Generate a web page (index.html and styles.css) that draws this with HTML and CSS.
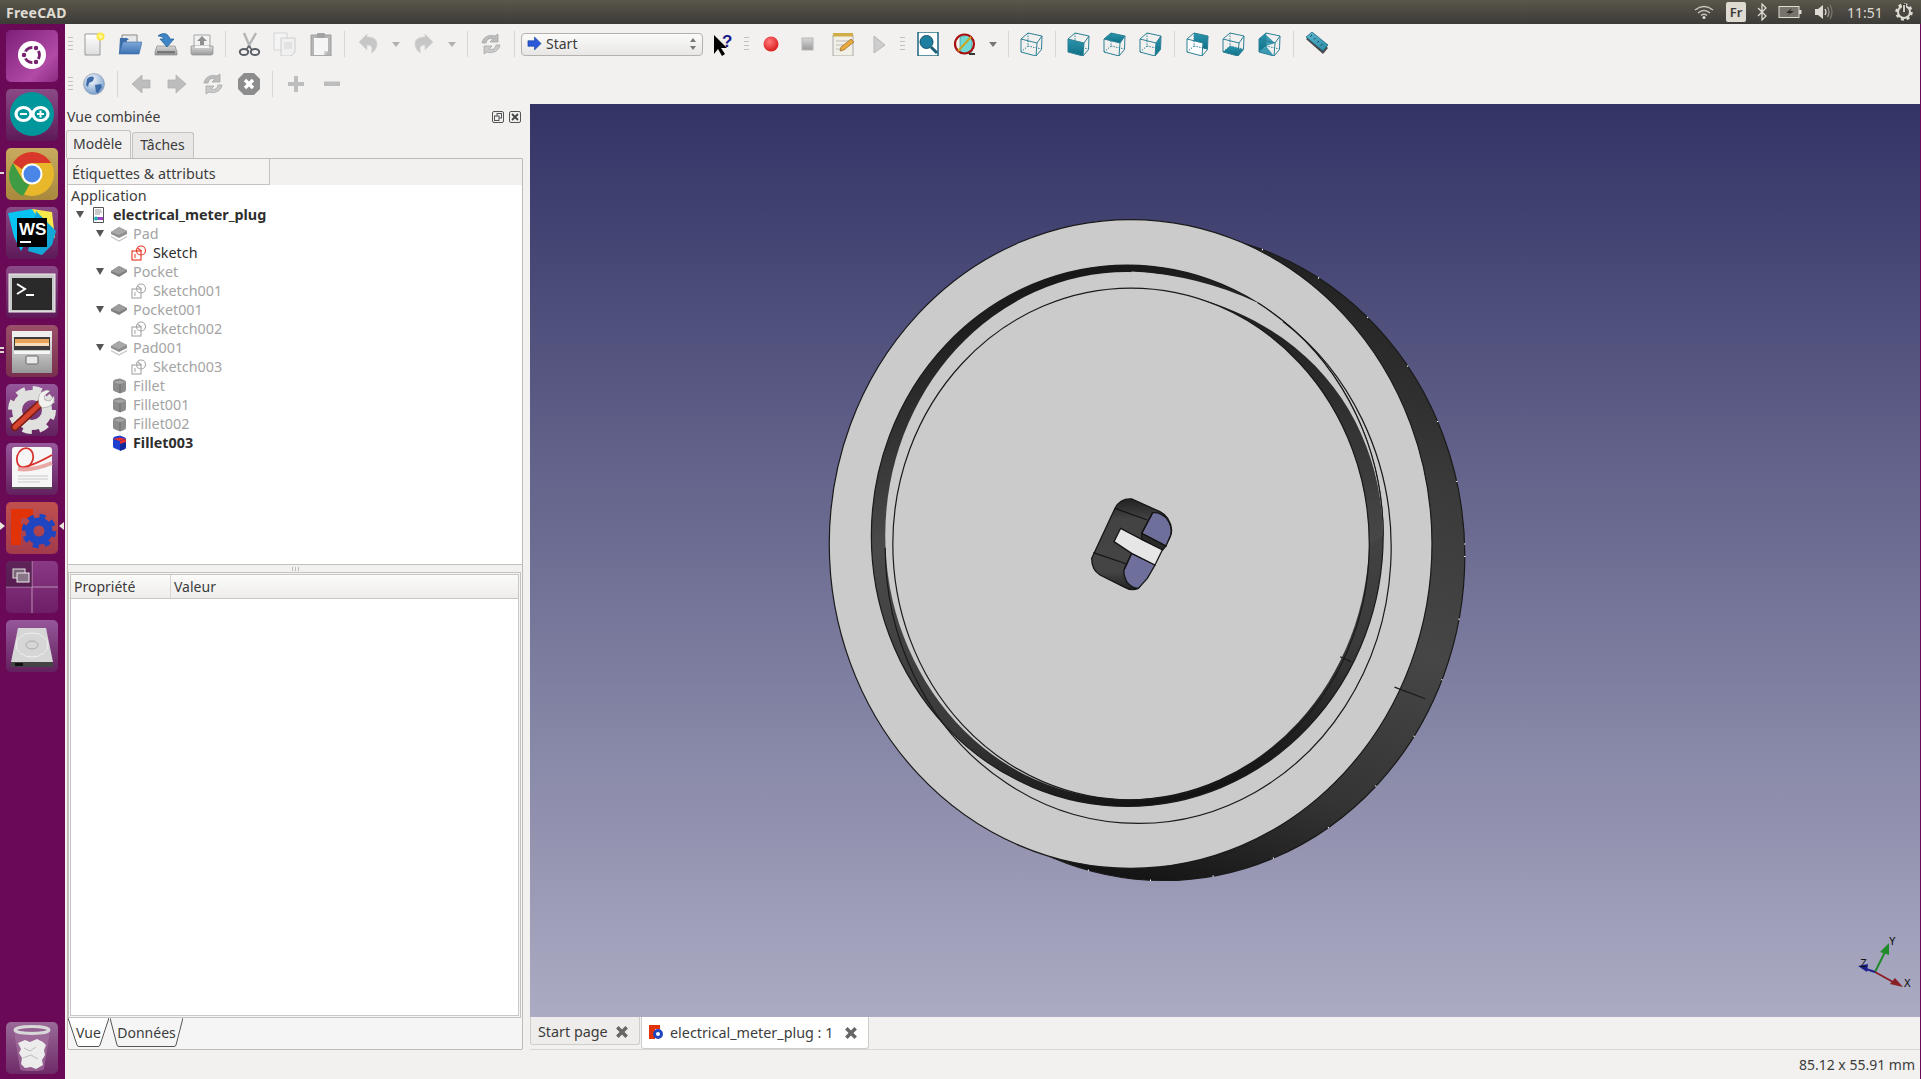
FILE: index.html
```html
<!DOCTYPE html>
<html lang="fr">
<head>
<meta charset="utf-8">
<title>FreeCAD</title>
<link rel="stylesheet" href="styles.css">
</head>
<body>
<svg class="defs" width="0" height="0" aria-hidden="true">
  <defs>
    <linearGradient id="g-paper" x1="0" y1="0" x2="0" y2="1"><stop offset="0" stop-color="#fff"/><stop offset="1" stop-color="#dedede"/></linearGradient>
    <linearGradient id="g-grey" x1="0" y1="0" x2="0" y2="1"><stop offset="0" stop-color="#d8d8d8"/><stop offset="1" stop-color="#9a9a9a"/></linearGradient>
    <linearGradient id="g-folder" x1="0" y1="0" x2="0" y2="1"><stop offset="0" stop-color="#7fa8d8"/><stop offset="1" stop-color="#3b72b4"/></linearGradient>
    <linearGradient id="g-cab" x1="0" y1="0" x2="0" y2="1"><stop offset="0" stop-color="#e4e4e2"/><stop offset="1" stop-color="#98989a"/></linearGradient>
    <linearGradient id="g-teal" x1="0" y1="0" x2="0" y2="1"><stop offset="0" stop-color="#2a96ae"/><stop offset="1" stop-color="#0f6f86"/></linearGradient>
    <linearGradient id="g-ruler" x1="0" y1="0" x2="1" y2="1"><stop offset="0" stop-color="#5cb8d0"/><stop offset="1" stop-color="#2a8aa6"/></linearGradient>
    <radialGradient id="g-red" cx=".4" cy=".35" r=".7"><stop offset="0" stop-color="#ff7a7a"/><stop offset="1" stop-color="#d81818"/></radialGradient>
    <radialGradient id="g-globe" cx=".4" cy=".3" r=".8"><stop offset="0" stop-color="#f4f8fc"/><stop offset="1" stop-color="#6a94c6"/></radialGradient>
    <linearGradient id="g-side" x1="0.75" y1="0" x2="0.45" y2="1"><stop offset="0" stop-color="#1e1e1e"/><stop offset=".3" stop-color="#3a3a3a"/><stop offset=".55" stop-color="#464646"/><stop offset=".8" stop-color="#343434"/><stop offset="1" stop-color="#141414"/></linearGradient>
    <linearGradient id="g-groove" x1="0.3" y1="0" x2="0.5" y2="1"><stop offset="0" stop-color="#141414"/><stop offset=".45" stop-color="#4a4a4a"/><stop offset=".8" stop-color="#3a3a3a"/><stop offset="1" stop-color="#141414"/></linearGradient>
    <linearGradient id="g-crescent" x1="0" y1="0" x2="0" y2="1"><stop offset="0" stop-color="#1c1c1c"/><stop offset="1" stop-color="#484848"/></linearGradient>
    <linearGradient id="g-knob" x1="0" y1="0" x2="0" y2="1"><stop offset="0" stop-color="#222"/><stop offset=".22" stop-color="#434343"/><stop offset=".8" stop-color="#444"/><stop offset="1" stop-color="#222"/></linearGradient>

    <symbol id="i-new" viewBox="0 0 24 24"><path d="M3 2h15v21H3z" fill="url(#g-paper)" stroke="#9a9a9a"/><circle cx="18.500" cy="4.500" r="4" fill="#fde84a"/><circle cx="18.500" cy="4.500" r="2" fill="#fff79a"/></symbol>
    <symbol id="i-open" viewBox="0 0 24 24"><path d="M4 3h15v8H4z" fill="#e8e8e8" stroke="#8a8a8a"/><path d="M2 6h7l2 2h-2l-2 14H1z" fill="#3c6ea8"/><path d="M5 10h19l-3 12H1z" fill="url(#g-folder)" stroke="#3a6ca6" stroke-width=".6"/></symbol>
    <symbol id="i-save" viewBox="0 0 24 24"><path d="M3 14h18l2 6v3H1v-3z" fill="url(#g-grey)" stroke="#8a8a8a" stroke-width=".7"/><rect x="3" y="19" width="18" height="2.500" fill="#777"/><path d="M4 4c5-4 10-3 12 3h4l-7 8-7-8h4C9 5 7 4 4 4z" fill="#3f86c8" stroke="#1f5a94" stroke-width=".7"/></symbol>
    <symbol id="i-saveas" viewBox="0 0 24 24"><path d="M4 3h16v13H4z" fill="#f2f2f2" stroke="#a5a5a5"/><path d="M12 4l5 5h-3v4h-4V9H7z" fill="#8f8f8f"/><path d="M1 14h22v7q0 2-2 2H3q-2 0-2-2z" fill="url(#g-grey)" stroke="#8d8d8d" stroke-width=".7"/><rect x="5" y="14" width="14" height="2" fill="#f7f7f7"/></symbol>
    <symbol id="i-cut" viewBox="0 0 24 24"><path d="M7 1l6 14M19 1L11 15" stroke="#b5b5b5" stroke-width="2.400" fill="none"/><ellipse cx="7" cy="20" rx="4.200" ry="3" fill="none" stroke="#5b6068" stroke-width="2"/><ellipse cx="18" cy="20" rx="4.200" ry="3" fill="none" stroke="#5b6068" stroke-width="2"/><path d="M12 14L9 18M12 14l3 4" stroke="#5b6068" stroke-width="1.600"/></symbol>
    <symbol id="i-copy" viewBox="0 0 24 24"><path d="M1 1h13v17H1z" fill="#f4f4f4" stroke="#d4d4d4"/><path d="M8 6h14v14l-4 4H8z" fill="#f0f0f0" stroke="#cdcdcd"/><path d="M11 10h8v7h-8z" fill="#e2e2e2"/></symbol>
    <symbol id="i-paste" viewBox="0 0 24 24"><path d="M2 3h20v21H2z" fill="#b5b5b5" stroke="#9c9c9c"/><path d="M5 6h14v13l-4 4H5z" fill="#f5f5f5"/><rect x="8" y="1" width="8" height="5" rx="1" fill="#a2a2a2"/><path d="M15 23v-4h4z" fill="#cfcfcf"/></symbol>
    <symbol id="i-undo" viewBox="0 0 24 24"><path d="M11 2L3 10l8 8v-5c3 0 5 1 5 4 0 2-1 4-1 4 4-2 6-5 6-9 0-5-4-7-10-7z" fill="#c6c6c6" stroke="#d6d6d6" stroke-width=".7"/></symbol>
    <symbol id="i-redo" viewBox="0 0 24 24"><path d="M13 2l8 8-8 8v-5c-3 0-5 1-5 4 0 2 1 4 1 4-4-2-6-5-6-9 0-5 4-7 10-7z" fill="#c6c6c6" stroke="#d6d6d6" stroke-width=".7"/></symbol>
    <symbol id="i-refresh" viewBox="0 0 24 24"><path d="M3 11C4 5 10 2 16 4l3-2v8h-8l3-3c-4-1-6 0-7 4z" fill="#bcbcbc" stroke="#a2a2a2" stroke-width=".7"/><path d="M21 13c-1 6-7 9-13 7l-3 2v-8h8l-3 3c4 1 6 0 7-4z" fill="#c9c9c9" stroke="#a2a2a2" stroke-width=".7"/></symbol>
    <symbol id="i-rec" viewBox="0 0 24 24"><circle cx="12" cy="12" r="7.500" fill="url(#g-red)"/></symbol>
    <symbol id="i-stop" viewBox="0 0 24 24"><rect x="7" y="6" width="11" height="12" fill="url(#g-grey)" stroke="#b8b8b8"/></symbol>
    <symbol id="i-note" viewBox="0 0 24 24"><path d="M2 3h20v21H2z" fill="#f1efe6" stroke="#aaa"/><rect x="2" y="1" width="20" height="3.500" fill="#cfae4a"/><path d="M5 9h13M5 13h9M5 17h7" stroke="#bbb"/><path d="M9 19l1-4L20 7l3 3-10 8z" fill="#e7a83e" stroke="#8a5f1a" stroke-width=".6"/></symbol>
    <symbol id="i-play" viewBox="0 0 24 24"><path d="M7 4l11 9L7 21z" fill="#cdcdcd" stroke="#b8b8b8"/></symbol>
    <symbol id="i-fit" viewBox="0 0 24 24"><path d="M2 0h20v24H2z" fill="#fff" stroke="#2a6e86" stroke-width="1.600"/><circle cx="10.500" cy="10" r="6.500" fill="#1f7fa0" stroke="#134f66"/><path d="M15 15l6 6" stroke="#1a5f78" stroke-width="3"/></symbol>
    <symbol id="i-draw" viewBox="0 0 24 24"><path d="M7 5l8-2 4 3v14l-8 2-4-3z" fill="#72d8d4" stroke="#3a9a98" stroke-width=".7"/><circle cx="11.500" cy="12" r="9.500" fill="none" stroke="#a80f0f" stroke-width="2.200"/><path d="M18 5L5 19" stroke="#c9a620" stroke-width="2"/><path d="M16 21h6v2h-6z" fill="#333"/></symbol>
    <symbol id="i-cube" viewBox="0 0 24 24"><g fill="none" stroke="#2b7f94" stroke-width="1"><path d="M8 1v13M8 14L1 20M8 14l13.500 3" stroke-dasharray="1.400 1.200"/><path d="M1 7L8 1l14 3-.5 13.500L16 24 1 20zM1 7l16 4 5-7M17 11l-1 13"/></g></symbol>
    <symbol id="i-front" viewBox="0 0 24 24"><path d="M1 7l16 4-1 13-15-4z" fill="url(#g-teal)"/><use href="#i-cube" width="24" height="24"/></symbol>
    <symbol id="i-top" viewBox="0 0 24 24"><path d="M1 7L8 1l14 3-5 7z" fill="url(#g-teal)"/><use href="#i-cube" width="24" height="24"/></symbol>
    <symbol id="i-right" viewBox="0 0 24 24"><path d="M17 11l5-7-.5 13.500L16 24z" fill="url(#g-teal)"/><use href="#i-cube" width="24" height="24"/></symbol>
    <symbol id="i-rear" viewBox="0 0 24 24"><path d="M8 1l14 3-.5 13.500L8 14z" fill="url(#g-teal)"/><path d="M1 7l16 4-1 13-15-4z" fill="#fff"/><use href="#i-cube" width="24" height="24"/></symbol>
    <symbol id="i-bottom" viewBox="0 0 24 24"><path d="M8 14l13.500 3.500L16 24 1 20z" fill="url(#g-teal)"/><use href="#i-cube" width="24" height="24"/></symbol>
    <symbol id="i-left" viewBox="0 0 24 24"><path d="M1 7L8 1v13l-7 6z" fill="url(#g-teal)"/><path d="M8 3l9 8-9 3zM1 20l7-6 8 10z" fill="#3a9ab2"/><use href="#i-cube" width="24" height="24"/></symbol>
    <symbol id="i-measure" viewBox="0 0 24 24"><path d="M1 7l6-5 16 14-5 6z" fill="#4a4a4a"/><path d="M1 5l6-5 16 13-5 6z" fill="url(#g-ruler)" stroke="#1f5f74" stroke-width=".7"/><path d="M7 3l-1.500 1.500M10.500 6L9 7.500M14 9l-1.500 1.500M17.500 12L16 13.500" stroke="#123" stroke-width=".9"/></symbol>
    <symbol id="i-globe" viewBox="0 0 24 24"><circle cx="12" cy="12" r="10.500" fill="url(#g-globe)" stroke="#8a96a6" stroke-width=".6"/><path d="M5 7c3-3 6-3 7-1l-1 3-4 2-1 4-2-2zM13 13l6-1 1 3-4 6-2-1z" fill="#3c6aa6"/></symbol>
    <symbol id="i-back" viewBox="0 0 24 24"><path d="M3 12l10-9v5h8v8h-8v5z" fill="#bdbdbd" stroke="#adadad" stroke-width=".7"/></symbol>
    <symbol id="i-fwd" viewBox="0 0 24 24"><path d="M21 12l-10-9v5H3v8h8v5z" fill="#bdbdbd" stroke="#adadad" stroke-width=".7"/></symbol>
    <symbol id="i-halt" viewBox="0 0 24 24"><path d="M7 1h10l6 6v10l-6 6H7l-6-6V7z" fill="#8d8d8d"/><path d="M8 8l8 8M16 8l-8 8" stroke="#fff" stroke-width="3.400"/></symbol>
    <symbol id="i-plus" viewBox="0 0 24 24"><path d="M10 4h4v6h6v4h-6v6h-4v-6H4v-4h6z" fill="#bdbdbd"/></symbol>
    <symbol id="i-minus" viewBox="0 0 24 24"><rect x="4" y="9.500" width="16" height="4.500" fill="#bdbdbd"/></symbol>

    <symbol id="t-doc" viewBox="0 0 16 16"><path d="M2.500 0.500h10v15h-10z" fill="#fff" stroke="#555"/><path d="M4 3h6M4 5h7M4 7h5" stroke="#777" stroke-width=".8"/><rect x="6" y="10" width="6" height="3" fill="#a040c0"/><circle cx="5" cy="11.500" r="2" fill="#20b0b0"/></symbol>
    <symbol id="t-pad" viewBox="0 0 16 16"><path d="M0 10.500l8 4.500 8-4.500" fill="none" stroke="#c6c6c6" stroke-width="1.200"/><path d="M0 6l8-5 8 4v3l-8 4-8-4z" fill="#8e8e8e"/><path d="M0 6l8-5 8 4-8 4z" fill="#a8a8a8"/></symbol>
    <symbol id="t-pocket" viewBox="0 0 16 16"><path d="M0 7l8-5 8 4v2l-8 5-8-4z" fill="#7f7f7f"/><path d="M0 7l8-5 8 4-8 4z" fill="#9c9c9c"/></symbol>
    <symbol id="t-sketch" viewBox="0 0 16 16"><g fill="none" stroke="currentColor" stroke-width="1.100"><rect x="1" y="6" width="9" height="9"/><circle cx="10" cy="5.500" r="4.500"/><path d="M6.500 3l4 3M3 10h2M3 12h2"/></g></symbol>
    <symbol id="t-box" viewBox="0 0 16 16"><path d="M2 4q0-2 2-2.500l5-1 5 2q1 .5 1 2v7q0 2-2 2.500l-4 1.500-5-2q-2-.5-2-2z" fill="#8c8c8c"/><path d="M2 4l7-1.500L15 4 9 6z" fill="#a6a6a6"/><path d="M9 6v9" stroke="#6a6a6a"/></symbol>
    <symbol id="t-fillet" viewBox="0 0 16 16"><path d="M2 4q0-2 2-2.500l5-1 5 2q1 .5 1 2v7q0 2-2 2.500l-4 1.500-5-2q-2-.5-2-2z" fill="#1e3fd0"/><path d="M2 4l7-1.500L15 4 9 6z" fill="#e23030"/><path d="M9 6l6-2v8q0 2-2 2.500L9 16z" fill="#102a9a"/><path d="M9 6l6-2v3l-6 2z" fill="#e23030"/></symbol>
  </defs>
</svg>

<header class="panel-top">
  <span class="app-name">FreeCAD</span>
  <div class="indicators">
    <svg class="ind ind-wifi" viewBox="0 0 20 14" width="20" height="14"><g fill="none" stroke="#c9c6be" stroke-width="1.500"><path d="M1 5q9-7 18 0M4 8q6-5 12 0M7 10.500q3-2.500 6 0"/></g><circle cx="10" cy="12.500" r="1.500" fill="#dfdbd2"/></svg>
    <span class="lang">Fr</span>
    <svg class="ind ind-bt" viewBox="0 0 10 18" width="10" height="18"><path d="M1 5l8 8-4 4V1l4 4-8 8" fill="none" stroke="#dfdbd2" stroke-width="1.300"/></svg>
    <svg class="ind ind-bat" viewBox="0 0 24 14" width="24" height="14"><rect x="1" y="1.500" width="20" height="11" fill="#77746c" stroke="#dfdbd2"/><rect x="21" y="5" width="2.500" height="4" fill="#dfdbd2"/><path d="M14 3L8 8h4l-3 3 7-5h-4z" fill="#2c2b28"/></svg>
    <svg class="ind ind-vol" viewBox="0 0 20 18" width="20" height="18"><path d="M1 6h3l5-4v14l-5-4H1z" fill="#dfdbd2"/><g fill="none" stroke-width="1.300"><path d="M11 6q2 3 0 6" stroke="#dfdbd2"/><path d="M13.500 4q3 5 0 10" stroke="#9d9a92"/><path d="M16 2q4 7 0 14" stroke="#77746c"/></g></svg>
    <span class="clock">11:51</span>
    <svg class="ind ind-gear" viewBox="0 0 18 18" width="18" height="18"><circle cx="9" cy="9" r="6" fill="none" stroke="#dfdbd2" stroke-width="2"/><circle cx="9" cy="9" r="7.500" fill="none" stroke="#dfdbd2" stroke-width="2.500" stroke-dasharray="3 2.890"/><path d="M9 1v8" stroke="#3c3b37" stroke-width="4"/><path d="M9 2v7" stroke="#dfdbd2" stroke-width="1.800"/></svg>
  </div>
</header>

<div class="main">
  <nav class="launcher">
    <div class="tile tile-ubuntu"><svg viewBox="0 0 52 52"><circle cx="26" cy="25" r="14" fill="#fff"/><circle cx="26" cy="25" r="7.500" fill="none" stroke="#77216f" stroke-width="2.800"/><g fill="#77216f" stroke="#fff" stroke-width="1.500"><circle cx="18" cy="25" r="3"/><circle cx="30" cy="18" r="3"/><circle cx="30" cy="32" r="3"/></g></svg></div>
    <div class="tile tile-arduino"><svg viewBox="0 0 52 52"><circle cx="26" cy="25" r="22" fill="#00979c"/><g fill="none" stroke="#fff" stroke-width="3.200"><ellipse cx="17.500" cy="25" rx="7.500" ry="6.500"/><ellipse cx="34.500" cy="25" rx="7.500" ry="6.500"/></g><path d="M14 25h7M31 25h7M34.500 21.500v7" stroke="#fff" stroke-width="2"/></svg></div>
    <div class="tile tile-chrome"><svg viewBox="0 0 52 52"><circle cx="26" cy="26" r="22" fill="#e8b82a"/><path d="M7 15a22 22 0 0 1 38 0H26a11 11 0 0 0-10 6z" fill="#d8372b"/><path d="M7 15l9.500 16.500a11 11 0 0 0 7 5L17 48A22 22 0 0 1 7 15z" fill="#3f9c44"/><circle cx="26" cy="26" r="10.500" fill="#fff"/><circle cx="26" cy="26" r="8.500" fill="#4a86e8"/></svg></div>
    <div class="tile tile-ws"><svg viewBox="0 0 52 52"><path d="M2 6l24-4 7 9-18 33L8 30z" fill="#07c3f2"/><path d="M26 2l20 3 3 26-8-6z" fill="#f7e94a"/><path d="M30 4l20 20-4 14-10 10-14-4z" fill="#11a8d8"/><rect x="11" y="11" width="30" height="29" fill="#000"/><text class="ws-text" x="13" y="28">WS</text><rect x="14" y="34" width="11" height="2" fill="#fff"/></svg></div>
    <div class="tile tile-term"><svg viewBox="0 0 52 52"><rect x="3" y="8" width="46" height="38" fill="#c9c9c9" stroke="#eee"/><rect x="6" y="12" width="40" height="32" fill="#2a2a2a"/><path d="M11 18l8 5-8 5" fill="none" stroke="#fff" stroke-width="2"/><rect x="20" y="28" width="8" height="2" fill="#fff"/></svg></div>
    <div class="tile tile-files"><svg viewBox="0 0 52 52"><path d="M6 6h40v8H6z" fill="#efefed"/><rect x="6" y="12" width="40" height="36" fill="url(#g-cab)"/><rect x="8" y="12" width="36" height="13" fill="#3c3c3c"/><rect x="9" y="14" width="34" height="6" fill="#e8a35a"/><rect x="9" y="18" width="34" height="3" fill="#f7ddb8"/><path d="M8 26h36v3H8z" fill="#f5f5f5"/><rect x="20" y="31" width="12" height="8" rx="1" fill="#e9e9e9" stroke="#666"/></svg></div>
    <div class="tile tile-settings"><svg viewBox="0 0 52 52"><circle cx="26" cy="26" r="15" fill="none" stroke="#e0e0de" stroke-width="10"/><circle cx="26" cy="26" r="21" fill="none" stroke="#e0e0de" stroke-width="6" stroke-dasharray="9 7.500"/><path d="M9 43L36 18" stroke="#7a1c12" stroke-width="8" stroke-linecap="round"/><path d="M9 43L36 18" stroke="#d4442e" stroke-width="5" stroke-linecap="round"/><path d="M33 20q-3-12 8-14l3 1-6 5 1 4 5 1 4-5q2 11-12 12z" fill="#f2f2f0" stroke="#999" stroke-width=".6"/></svg></div>
    <div class="tile tile-evince"><svg viewBox="0 0 52 52"><rect x="6" y="4" width="40" height="42" rx="3" fill="#f6f6f6"/><rect x="6" y="44" width="40" height="2" fill="#555"/><g fill="none" stroke="#d9322e"><ellipse cx="19" cy="15" rx="8" ry="10" stroke-width="1.800" transform="rotate(18 19 15)"/><path d="M13 24q8 2 33-12" stroke-width="2"/><path d="M12 26q14 2 34-6" stroke="#e9a8a6" stroke-width="4"/></g><path d="M12 33h30M12 36h30M12 39h22" stroke="#c9c9c9"/></svg></div>
    <div class="tile tile-freecad"><svg viewBox="0 0 52 52"><g fill="#e23208"><rect x="5" y="7" width="10" height="36"/><rect x="5" y="7" width="22" height="9"/><rect x="5" y="22" width="16" height="7"/></g><circle cx="33" cy="29" r="9.500" fill="none" stroke="#1f46c0" stroke-width="8"/><circle cx="33" cy="29" r="15" fill="none" stroke="#1f46c0" stroke-width="4.500" stroke-dasharray="6 5.800"/></svg></div>
    <div class="tile tile-workspace"><svg viewBox="0 0 52 52"><path d="M26 0v52M0 26h52" stroke="#c9a8c6" stroke-width=".8"/><rect x="0" y="0" width="26" height="26" fill="#2b0a28" opacity=".45"/><rect x="7" y="8" width="12" height="9" fill="#7a6478" stroke="#e2e2e2"/><rect x="11" y="12" width="12" height="9" fill="#8a7488" stroke="#f0f0f0"/></svg></div>
    <div class="tile tile-hdd"><svg viewBox="0 0 52 52"><path d="M12 8h28l7 34H5z" fill="#d6d6d6"/><ellipse cx="26" cy="25" rx="16" ry="12" fill="none" stroke="#f0f0f0"/><ellipse cx="26" cy="25" rx="6" ry="4" fill="none" stroke="#a9a9a9"/><path d="M5 42h42v5H5z" fill="#444"/><path d="M9 43h8v3H9z" fill="#111"/></svg></div>
    <div class="tile tile-trash"><svg viewBox="0 0 52 52"><path d="M8 9l6 38q0 2 12 2t12-2l6-38z" fill="#a878a4" opacity=".6"/><path d="M12 21l7-3 5 2 7-3 6 3 3 3-2 5 1 5-3 5 1 5-7 4-5-2-6 1-4-4 1-6-3-5 2-4z" fill="#ececec"/><path d="M18 26l6 3 6-4M17 36l8-3 7 4" fill="none" stroke="#bdbdbd"/><ellipse cx="26" cy="8" rx="17" ry="3.500" fill="none" stroke="#d8d8d8" stroke-width="2.800"/></svg></div>
    <span class="pip pip-chrome"></span><span class="pip pip-files"></span><span class="pip pip-files2"></span>
    <span class="tri tri-left"></span><span class="tri tri-right"></span>
  </nav>

  <div class="app">
    <div class="toolbars">
      <div class="toolbar">
        <span class="handle"></span>
        <span class="tool"><svg class="ic"><use href="#i-new"/></svg></span>
        <span class="tool"><svg class="ic"><use href="#i-open"/></svg></span>
        <span class="tool"><svg class="ic"><use href="#i-save"/></svg></span>
        <span class="tool"><svg class="ic"><use href="#i-saveas"/></svg></span>
        <span class="sep"></span>
        <span class="tool"><svg class="ic"><use href="#i-cut"/></svg></span>
        <span class="tool"><svg class="ic"><use href="#i-copy"/></svg></span>
        <span class="tool"><svg class="ic"><use href="#i-paste"/></svg></span>
        <span class="sep"></span>
        <span class="tool"><svg class="ic"><use href="#i-undo"/></svg></span>
        <span class="dd"></span>
        <span class="tool"><svg class="ic"><use href="#i-redo"/></svg></span>
        <span class="dd"></span>
        <span class="sep"></span>
        <span class="tool"><svg class="ic"><use href="#i-refresh"/></svg></span>
        <span class="sep"></span>
        <div class="combo">
          <svg class="combo-ic" viewBox="0 0 16 16"><path d="M1 5h7V1l7 7-7 7v-4H1z" fill="#2a58d8" stroke="#123a9a" stroke-width=".6"/></svg>
          <span class="combo-text">Start</span>
          <span class="combo-arrows"><i class="up"></i><i class="down"></i></span>
        </div>
        <span class="tool tool-help"><svg class="ic" viewBox="0 0 24 24"><path d="M4 3v19l4-5 4 7 3-2-4-6h6z" fill="#000"/><text class="help-q" x="12" y="15">?</text></svg></span>
        <span class="handle handle-a"></span>
        <span class="tool"><svg class="ic"><use href="#i-rec"/></svg></span>
        <span class="tool"><svg class="ic"><use href="#i-stop"/></svg></span>
        <span class="tool"><svg class="ic"><use href="#i-note"/></svg></span>
        <span class="tool"><svg class="ic"><use href="#i-play"/></svg></span>
        <span class="handle handle-b"></span>
        <span class="tool"><svg class="ic"><use href="#i-fit"/></svg></span>
        <span class="tool tool-draw"><svg class="ic"><use href="#i-draw"/></svg></span>
        <span class="dd dd-dark"></span>
        <span class="sep"></span>
        <span class="tool"><svg class="ic"><use href="#i-cube"/></svg></span>
        <span class="sep"></span>
        <span class="tool"><svg class="ic"><use href="#i-front"/></svg></span>
        <span class="tool"><svg class="ic"><use href="#i-top"/></svg></span>
        <span class="tool"><svg class="ic"><use href="#i-right"/></svg></span>
        <span class="sep"></span>
        <span class="tool"><svg class="ic"><use href="#i-rear"/></svg></span>
        <span class="tool"><svg class="ic"><use href="#i-bottom"/></svg></span>
        <span class="tool"><svg class="ic"><use href="#i-left"/></svg></span>
        <span class="sep"></span>
        <span class="tool"><svg class="ic"><use href="#i-measure"/></svg></span>
      </div>
      <div class="toolbar">
        <span class="handle"></span>
        <span class="tool"><svg class="ic"><use href="#i-globe"/></svg></span>
        <span class="sep"></span>
        <span class="tool"><svg class="ic"><use href="#i-back"/></svg></span>
        <span class="tool"><svg class="ic"><use href="#i-fwd"/></svg></span>
        <span class="tool"><svg class="ic"><use href="#i-refresh"/></svg></span>
        <span class="tool"><svg class="ic"><use href="#i-halt"/></svg></span>
        <span class="sep"></span>
        <span class="tool"><svg class="ic"><use href="#i-plus"/></svg></span>
        <span class="tool"><svg class="ic"><use href="#i-minus"/></svg></span>
      </div>
    </div>

    <div class="workspace">
      <aside class="dock">
        <div class="dock-title">
          <span>Vue combinée</span>
          <span class="dock-btns">
            <svg viewBox="0 0 12 12" width="12" height="12"><rect x="0.500" y="0.500" width="11" height="11" rx="1.500" fill="none" stroke="#555"/><rect x="5" y="2.500" width="4.500" height="4.500" fill="none" stroke="#555"/><rect x="2.500" y="5" width="4.500" height="4.500" fill="#f2f1f0" stroke="#555"/></svg>
            <svg viewBox="0 0 12 12" width="12" height="12"><rect x="0.500" y="0.500" width="11" height="11" rx="1.500" fill="none" stroke="#555"/><path d="M3 3l6 6M9 3l-6 6" stroke="#444" stroke-width="1.800"/></svg>
          </span>
        </div>
        <div class="tabs">
          <span class="tab tab-on">Modèle</span>
          <span class="tab">Tâches</span>
        </div>
        <div class="panel">
          <div class="tree-head"><span class="tree-head-cell">Étiquettes &amp; attributs</span></div>
          <div class="tree">
            <div class="row row-root">Application</div>
            <div class="row l0 bold"><i class="arrow"></i><svg class="ti"><use href="#t-doc"/></svg>electrical_meter_plug</div>
            <div class="row l1 off"><i class="arrow"></i><svg class="ti"><use href="#t-pad"/></svg>Pad</div>
            <div class="row l2 red"><i class="arrow none"></i><svg class="ti"><use href="#t-sketch"/></svg><span class="dark">Sketch</span></div>
            <div class="row l1 off"><i class="arrow"></i><svg class="ti"><use href="#t-pocket"/></svg>Pocket</div>
            <div class="row l2 off"><i class="arrow none"></i><svg class="ti"><use href="#t-sketch"/></svg>Sketch001</div>
            <div class="row l1 off"><i class="arrow"></i><svg class="ti"><use href="#t-pocket"/></svg>Pocket001</div>
            <div class="row l2 off"><i class="arrow none"></i><svg class="ti"><use href="#t-sketch"/></svg>Sketch002</div>
            <div class="row l1 off"><i class="arrow"></i><svg class="ti"><use href="#t-pad"/></svg>Pad001</div>
            <div class="row l2 off"><i class="arrow none"></i><svg class="ti"><use href="#t-sketch"/></svg>Sketch003</div>
            <div class="row l1 off"><i class="arrow none"></i><svg class="ti"><use href="#t-box"/></svg>Fillet</div>
            <div class="row l1 off"><i class="arrow none"></i><svg class="ti"><use href="#t-box"/></svg>Fillet001</div>
            <div class="row l1 off"><i class="arrow none"></i><svg class="ti"><use href="#t-box"/></svg>Fillet002</div>
            <div class="row l1 bold"><i class="arrow none"></i><svg class="ti"><use href="#t-fillet"/></svg>Fillet003</div>
          </div>
          <div class="hsplit"><i></i></div>
          <div class="props">
            <div class="props-head"><span class="col-prop">Propriété</span><span class="col-val">Valeur</span></div>
            <div class="props-body"></div>
          </div>
          <div class="south">
            <span class="stab stab-vue"><svg class="stab-bg" viewBox="0 0 41 30" preserveAspectRatio="none"><path d="M0 0l9 27q.5 1.500 2 1.500h19q1.500 0 2-1.500l9-27" fill="#fff" stroke="#555" stroke-width="1"/></svg><span class="stab-text">Vue</span></span>
            <span class="stab stab-data"><svg class="stab-bg" viewBox="0 0 73 30" preserveAspectRatio="none"><path d="M0 0l7 27q.5 1.500 2 1.500h55q1.500 0 2-1.500l7-27" fill="none" stroke="#555" stroke-width="1"/></svg><span class="stab-text">Données</span></span>
          </div>
        </div>
      </aside>
      <div class="vsplit"><i></i></div>
      <section class="center">
        <div class="viewer">
          <svg class="scene" viewBox="530 104 1390 913" preserveAspectRatio="none">
            <g transform="translate(820 210) scale(.4209 .4337)">
              <ellipse class="e" cx="816" cy="798" rx="716" ry="748" fill="url(#g-side)"/>
              <ellipse class="e spark" cx="816" cy="798" rx="716" ry="748"/>
              <ellipse class="e" cx="738" cy="770" rx="716" ry="748" fill="#cbcbcb"/>
              <ellipse class="e" cx="730" cy="751" rx="608" ry="624" fill="url(#g-groove)"/>
              <ellipse cx="730" cy="751" rx="575" ry="608" fill="#cbcbcb"/>
              <path d="M740 142Q900 150 1040 214A608 624 0 0 1 1338 751L1100 751L740 300Z" fill="#cbcbcb"/>
              <path class="e" d="M1040 214A608 624 0 0 1 1338 751" fill="none"/>
              <path d="M880 199A566 590 0 0 1 1305 770L1338 751C1335 520 1200 280 880 199Z" fill="url(#g-crescent)"/>
              <ellipse class="e" cx="739" cy="770" rx="566" ry="590" fill="none"/>
              <path class="e" d="M1100 257A601 636 0 1 1 155 779" fill="none"/>
              <path class="e" d="M1365 1100L1438 1127M1236 1030L1262 1042" fill="none"/>
            </g>
            <g transform="translate(1060 470) scale(.3333)">
              <path class="k" d="M165 115Q180 85 215 87L300 125Q330 140 335 180Q335 205 305 240L235 355Q215 365 190 350L120 315Q95 300 95 265Z" fill="url(#g-knob)"/>
              <path class="k" d="M278 128Q300 125 320 145Q338 170 332 195L318 228L245 190Z" fill="#6f6f9b"/>
              <path class="k" d="M215 250L285 285L262 325L235 355Q215 355 200 335Q190 315 192 300Z" fill="#6f6f9b"/>
              <path class="k" d="M182 175L245 208L308 238L285 285L215 250L162 215Z" fill="#e6e6e6"/>
              <path class="k" d="M245 190L318 228L308 240L245 208Z" fill="#2a2a2a"/>
              <path class="k" d="M165 115L262 150M278 128L245 190M100 248L200 282M215 250L192 300" fill="none"/>
            </g>
            <g class="axes">
              <path d="M1875 972L1886 950" stroke="#1f8a2a" stroke-width="2"/><path d="M1889 943L1889 955L1880 952Z" fill="#1f8a2a"/>
              <path d="M1875 972L1893 982" stroke="#8a1f24" stroke-width="2"/><path d="M1903 987L1890 984L1895 978Z" fill="#8a1f24"/>
              <path d="M1875 972L1866 969" stroke="#1a1f8a" stroke-width="2"/><path d="M1858 966L1868 964L1867 972Z" fill="#1a1f8a"/>
              <text x="1889" y="945">Y</text><text x="1860" y="967">Z</text><text x="1904" y="987">X</text>
            </g>
          </svg>
        </div>
        <div class="doc-tabs">
          <span class="doc-tab">Start page<svg class="x" viewBox="0 0 12 12"><path d="M2 2l8 8M10 2l-8 8" stroke="#666" stroke-width="3"/></svg></span>
          <span class="doc-tab doc-on"><svg class="doc-ic" viewBox="0 0 16 16"><rect x="1" y="0" width="6" height="14" fill="#e23208"/><rect x="1" y="0" width="11" height="4" fill="#e23208"/><circle cx="10" cy="9" r="3.500" fill="none" stroke="#1f46c0" stroke-width="3"/></svg>electrical_meter_plug : 1<svg class="x" viewBox="0 0 12 12"><path d="M2 2l8 8M10 2l-8 8" stroke="#666" stroke-width="3"/></svg></span>
        </div>
      </section>
    </div>
    <footer class="status">85.12 x 55.91 mm</footer>
  </div>
</div>
</body>
</html>
```
FILE: styles.css
```css
* { box-sizing: border-box; }
html, body { margin: 0; padding: 0; height: 100%; overflow: hidden; }
body {
  width: 1921px; height: 1079px; display: flex; flex-direction: column;
  background: #6a0a57; color: #3c3c3c;
  font-family: "Noto Sans", "Open Sans", sans-serif; font-size: 14px;
}
.defs { position: absolute; }

.panel-top {
  height: 24px; flex: none; display: flex; align-items: center; justify-content: space-between;
  background: linear-gradient(#5a564c, #3c3b37); padding: 0 8px 0 6px;
}
.app-name { color: #dfdbd2; font-weight: 700; font-size: 14px; letter-spacing: .2px; }
.indicators { display: flex; align-items: center; }
.ind { display: block; }
.lang {
  width: 20px; height: 20px; margin-left: 12px; background: #dfdbd2; color: #3c3b37; border-radius: 2px;
  font-size: 13px; font-weight: 600; display: flex; align-items: center; justify-content: center;
}
.ind-bt { margin-left: 11px; }
.ind-bat { margin-left: 11px; }
.ind-vol { margin-left: 12px; }
.clock { margin-left: 13px; color: #dfdbd2; font-size: 14px; width: 36px; }
.ind-gear { margin-left: 12px; }

.main { flex: 1; display: flex; min-height: 0; }
.launcher {
  width: 65px; flex: none; position: relative; display: flex; flex-direction: column; align-items: center;
  gap: 7px; padding: 6px 1px 5px 0; background: #6a0a57;
}
.tile { width: 52px; height: 52px; flex: none; border-radius: 5px; overflow: hidden; }
.tile svg { display: block; width: 52px; height: 52px; }
.tile-ubuntu { background: linear-gradient(135deg, #7c1f78, #b04aa6 70%, #8a2a80); }
.tile-arduino { background: linear-gradient(#8a4a86, #5e1a58); }
.tile-chrome { background: linear-gradient(#c8aa60, #a8883c); }
.tile-ws { background: linear-gradient(#8a4a86, #5e1a58); }
.tile-term { background: linear-gradient(#8a4a86, #5e1a58); }
.tile-files { background: linear-gradient(#9a5068, #78304e); }
.tile-settings { background: linear-gradient(#96589a, #63205e); }
.tile-evince { background: linear-gradient(#96589a, #63205e); }
.tile-freecad { background: linear-gradient(#c0504e, #a23a4c); }
.tile-workspace { background: linear-gradient(#8a3a84, #6e1e66); }
.tile-hdd { background: linear-gradient(#96589a, #63205e); }
.tile-trash { margin-top: auto; background: linear-gradient(#9a6a98, #6e2a68); }
.ws-text { fill: #fff; font-family: "Liberation Sans", sans-serif; font-weight: 700; font-size: 17px; }
.pip { position: absolute; left: 0; width: 4px; height: 2px; background: #dfdbd2; }
.pip-chrome { top: 148px; }
.pip-files { top: 323px; }
.pip-files2 { top: 327px; }
.tri { position: absolute; top: 498px; width: 0; height: 0; border-top: 4px solid transparent; border-bottom: 4px solid transparent; }
.tri-left { left: 0; border-left: 5px solid #e8e4dc; }
.tri-right { left: 59px; border-right: 5px solid #e8e4dc; }

.app { width: 1855px; flex: none; display: flex; flex-direction: column; background: #f2f1f0; }
.toolbars { height: 80px; flex: none; }
.toolbar { height: 40px; display: flex; align-items: center; }
.handle { width: 11px; height: 14px; flex: none; background: repeating-linear-gradient(#c4c2be 0 1px, #f2f1f0 1px 4px); background-size: 5px 100%; background-repeat: no-repeat; background-position: center; }
.handle-a { margin-right: 1px; }
.handle-b { margin-right: 2px; }
.tool-draw { margin-left: 1px; }
.tool { width: 36px; height: 36px; flex: none; display: flex; align-items: center; justify-content: center; }
.ic { width: 24px; height: 24px; display: block; }
.sep { width: 11px; height: 26px; flex: none; background: linear-gradient(#d8d6d3, #d8d6d3) center / 1px 100% no-repeat; }
.dd { width: 20px; flex: none; display: flex; justify-content: center; }
.dd::after { content: ""; border-left: 4px solid transparent; border-right: 4px solid transparent; border-top: 5px solid #b0b0b0; }
.dd-dark::after { border-top-color: #777; }
.combo {
  width: 182px; height: 23px; margin-left: 1px; flex: none; display: flex; align-items: center;
  border: 1px solid #b4b2ae; border-radius: 4px; background: linear-gradient(#fbfbfa, #e8e7e5);
  padding: 0 6px 2px 5px;
}
.combo-ic { width: 15px; height: 15px; }
.combo-text { margin-left: 4px; flex: 1; }
.combo-arrows { display: flex; flex-direction: column; gap: 4px; margin-top: 2px; }
.combo-arrows i { display: block; border-left: 3px solid transparent; border-right: 3px solid transparent; }
.combo-arrows .up { border-bottom: 4px solid #777; }
.combo-arrows .down { border-top: 4px solid #777; }
.tool-help { margin-left: 1px; margin-right: 1px; }
.help-q { fill: #1a1a8a; font-family: "Liberation Sans", sans-serif; font-size: 17px; font-weight: 700; }

.workspace { flex: 1; display: flex; min-height: 0; }
.dock { width: 460px; flex: none; display: flex; flex-direction: column; }
.dock-title { height: 25px; flex: none; display: flex; align-items: center; justify-content: space-between; padding: 0 4px 0 2px; }
.dock-btns { display: flex; gap: 5px; }
.dock-btns svg { display: block; }
.tabs { height: 29px; flex: none; display: flex; align-items: flex-end; padding-left: 1px; gap: 1px; }
.tab {
  height: 26px; padding: 0 8px 2px 7px; display: flex; align-items: center; background: #e9e8e6;
  border: 1px solid #c4c2be; border-bottom: none; border-radius: 3px 3px 0 0;
}
.tab-on { height: 28px; padding: 0 8px 2px 6px; background: #f2f1f0; }
.panel {
  flex: 1; margin-left: 2px; width: 456px; display: flex; flex-direction: column; min-height: 0;
  border: 1px solid #bdbbb8; border-radius: 0 0 2px 2px; background: #f5f5f5;
}
.tree-head { height: 26px; flex: none; background: #f2f1f0; display: flex; font-size: 14.350px; }
.tree-head-cell { width: 202px; padding: 3px 0 0 4px; display: flex; align-items: center; border: 1px solid #c4c2be; border-width: 0 1px 1px 0; background: #f4f3f2; }
.tree { height: 380px; flex: none; background: #fff; padding-top: 1px; border-bottom: 1px solid #c4c2be; font-size: 14.350px; }
.row { height: 19px; display: flex; align-items: center; line-height: 19px; white-space: nowrap; }
.row-root { padding-left: 3px; }
.l0 { padding-left: 6px; }
.l1 { padding-left: 26px; }
.l2 { padding-left: 46px; }
.arrow { width: 12px; flex: none; height: 8px; display: flex; justify-content: center; }
.arrow::after { content: ""; border-left: 4.500px solid transparent; border-right: 4.500px solid transparent; border-top: 7px solid #555; }
.arrow.none::after { display: none; }
.ti { width: 16px; height: 16px; margin: 0 6px 0 5px; flex: none; }
.bold { font-weight: 700; color: #2e2e2e; }
.off { color: #a4a4a4; }
.red { color: #e83020; }
.dark { color: #2e2e2e; }
.hsplit { height: 7px; flex: none; background: #f2f1f0; display: flex; justify-content: center; align-items: center; }
.hsplit i { width: 7px; height: 4px; background: repeating-linear-gradient(90deg, #bbb 0 1px, transparent 1px 3px); }
.props { flex: 1; min-height: 0; border: 1px solid #c4c2be; margin: 0 1px 0 0; padding: 1px; display: flex; flex-direction: column; }
.props-head { height: 25px; flex: none; display: flex; align-items: center; background: linear-gradient(#fbfbfa, #eeedeb); border: 1px solid #c9c7c4; }
.col-prop { width: 100px; padding-left: 3px; height: 100%; display: flex; align-items: center; border-right: 1px solid #d8d6d3; }
.col-val { padding-left: 3px; }
.props-body { flex: 1; background: #fff; border: 1px solid #c9c7c4; border-top: none; }
.south { height: 31px; flex: none; display: flex; gap: 1px; }
.stab { position: relative; height: 30px; padding-bottom: 2px; display: flex; justify-content: center; align-items: center; }
.stab-vue { width: 41px; }
.stab-data { width: 73px; }
.stab-bg { position: absolute; inset: 0; width: 100%; height: 100%; }
.stab-text { position: relative; }

.vsplit { width: 5px; flex: none; }
.center { flex: 1; min-width: 0; display: flex; flex-direction: column; }
.viewer { flex: 1; min-height: 0; background: linear-gradient(#333366, #ababc3); }
.scene { display: block; width: 100%; height: 100%; }
.e { stroke: #1a1a1a; stroke-width: 1.200px; vector-effect: non-scaling-stroke; }
.spark { fill: none; stroke: #fff; stroke-width: 1.500px; stroke-dasharray: 1 62; }
.k { stroke: #151515; stroke-width: 1.300px; vector-effect: non-scaling-stroke; }
.axes text { font-family: "DejaVu Sans Mono", monospace; font-size: 11px; fill: #111; }
.doc-tabs { height: 33px; flex: none; display: flex; align-items: flex-start; border-bottom: 1px solid #d8d6d3; font-size: 14.350px; }
.doc-tab {
  height: 28px; display: flex; align-items: center; padding: 2px 10px 0 7px; background: #eeedeb;
  border: 1px solid #cfcdca; border-top: none; border-radius: 0 0 3px 3px;
}
.doc-on { height: 32px; width: 228px; margin-left: 1px; background: #fff; padding: 0 10px 0 6px; }
.x { width: 14px; height: 14px; margin-left: auto; }
.doc-tab:not(.doc-on) { width: 110px; }
.doc-ic { width: 16px; height: 16px; margin-right: 6px; }
.status { height: 29px; flex: none; display: flex; align-items: center; justify-content: flex-end; padding-right: 5px; background: #f2f1f0; }
```
